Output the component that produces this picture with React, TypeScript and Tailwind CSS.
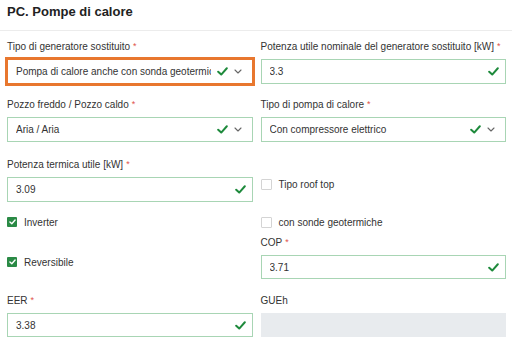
import React from "react";

const CheckMark = () => (
  <svg width="11" height="9" viewBox="0 0 12 10" className="shrink-0">
    <path d="M1.2 5.2 L4.6 8.4 L10.8 1.4" fill="none" stroke="#1e8a3c" strokeWidth="2.2" strokeLinecap="round" strokeLinejoin="round" />
  </svg>
);

const Chevron = () => (
  <svg width="8" height="5" viewBox="0 0 8 5" className="shrink-0">
    <path d="M1 1 L4 4 L7 1" fill="none" stroke="#666" strokeWidth="1.1" strokeLinecap="round" strokeLinejoin="round" />
  </svg>
);

interface LabelProps {
  text: string;
  required?: boolean;
}

const Label: React.FC<LabelProps> = ({ text, required }) => (
  <div className="h-[14px] leading-[14px] mb-[5px] text-[10px] text-[#333] whitespace-nowrap">
    {text}
    {required && <span className="text-[#e0524a] ml-[3px] text-[9px] relative -top-[1px]">*</span>}
  </div>
);

interface FieldProps {
  label: string;
  value?: string;
  required?: boolean;
  select?: boolean;
  focused?: boolean;
  disabled?: boolean;
  h?: string;
}

const Field: React.FC<FieldProps> = ({ label, value, required, select, focused, disabled, h = "h-[25px]" }) => (
  <div>
    <Label text={label} required={required} />
    {disabled ? (
      <div className={`${h} bg-[#e8ebee]`} />
    ) : (
      <div
        className={`${h} flex items-center pl-[8px] ${select ? "pr-[10px]" : "pr-[6px]"} border bg-white ${
          focused ? "border-[#e8772e] ring-2 ring-[#e8772e]" : "border-[#a8d5b4]"
        }`}
      >
        <span className="flex-1 min-w-0 overflow-hidden whitespace-nowrap text-[10px] text-[#333]">{value}</span>
        <span className="flex items-center gap-[6px] ml-[6px]">
          <CheckMark />
          {select && <Chevron />}
        </span>
      </div>
    )}
  </div>
);

interface CheckProps {
  label: string;
  checked?: boolean;
  className?: string;
}

const CheckRow: React.FC<CheckProps> = ({ label, checked, className = "" }) => (
  <div className={`flex items-center h-[14px] text-[10px] text-[#333] ${className}`}>
    {checked ? (
      <span className="w-[10px] h-[10px] bg-[#2a8a45] rounded-[1px] flex items-center justify-center mr-[7px]">
        <svg width="7" height="6" viewBox="0 0 8 7">
          <path d="M1 3.6 L3.2 5.6 L7 1.2" fill="none" stroke="#fff" strokeWidth="1.6" strokeLinecap="round" strokeLinejoin="round" />
        </svg>
      </span>
    ) : (
      <span className="w-[11px] h-[11px] border border-[#d4d4d4] rounded-[1px] bg-white mr-[7px]" />
    )}
    {label}
  </div>
);

const App: React.FC = () => {
  return (
    <div className="w-[512px] h-[346px] bg-white overflow-hidden font-['Liberation_Sans',Arial,sans-serif]">
      <div className="h-[31px] border-b border-[#ececec] pl-[7px] pt-[4px]">
        <h1 className="text-[13px] font-bold text-[#222] leading-[16px]">PC. Pompe di calore</h1>
      </div>
      <div className="pl-[7px] pr-[6px] pt-[9px]">
        <div className="grid grid-cols-2 gap-x-[8px]">
          <Field label="Tipo di generatore sostituito" required select focused value="Pompa di calore anche con sonda geotermica" />
          <Field label="Potenza utile nominale del generatore sostituito [kW]" required value="3.3" />
        </div>
        <div className="grid grid-cols-2 gap-x-[8px] mt-[14px]">
          <Field label="Pozzo freddo / Pozzo caldo" required select value="Aria / Aria" />
          <Field label="Tipo di pompa di calore" required select value="Con compressore elettrico" />
        </div>
        <div className="grid grid-cols-2 gap-x-[8px] mt-[16px]">
          <Field label="Potenza termica utile [kW]" required value="3.09" />
          <CheckRow label="Tipo roof top" className="mt-[19px]" />
        </div>
        <div className="grid grid-cols-2 gap-x-[8px] mt-[13px]">
          <CheckRow label="Inverter" checked />
          <CheckRow label="con sonde geotermiche" />
        </div>
        <div className="grid grid-cols-2 gap-x-[8px] mt-[7px]">
          <CheckRow label="Reversibile" checked className="mt-[19px]" />
          <Field label="COP" required value="3.71" h="h-[24px]" />
        </div>
        <div className="grid grid-cols-2 gap-x-[8px] mt-[15px]">
          <Field label="EER" required value="3.38" h="h-[24px]" />
          <Field label="GUEh" disabled h="h-[24px]" />
        </div>
      </div>
    </div>
  );
};

export default App;
